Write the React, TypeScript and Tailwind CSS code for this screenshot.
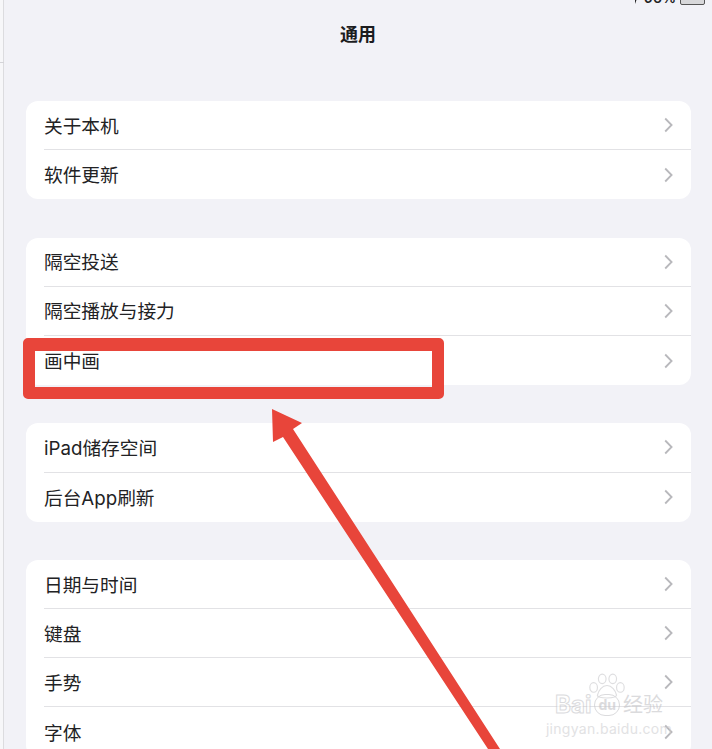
const groups = [
  ['关于本机', '软件更新'],
  ['隔空投送', '隔空播放与接力', '画中画'],
  ['iPad储存空间', '后台App刷新'],
  ['日期与时间', '键盘', '手势', '字体'],
];

function Chevron() {
  return (
    <svg width="9" height="16" viewBox="0 0 9 16" fill="none" className="shrink-0">
      <path d="M1.2 1.5 7.6 8l-6.4 6.5" stroke="#b8b8bc" strokeWidth="1.8" />
    </svg>
  );
}

function Row({ label, last }: { label: string; last: boolean }) {
  return (
    <div className="flex h-[49.2px] pl-[18px]">
      <div className={`flex flex-1 items-center justify-between pr-[18px] ${last ? '' : 'border-b border-[#e2e2e5]'}`}>
        <span className="pt-[4px] text-[18.7px] leading-none text-[#222224]">{label}</span>
        <Chevron />
      </div>
    </div>
  );
}

function StatusBar() {
  return (
    <div className="absolute right-[7px] top-[-9px] flex items-center gap-[4px] text-[#222]">
      <svg width="10" height="13" viewBox="0 0 10 13">
        <path d="M9 1 1 6h4v6z" fill="#222" />
      </svg>
      <span className="text-[14px] font-semibold leading-none">96%</span>
      <div className="h-[13px] w-[25px] rounded-[2px] border border-[#555] bg-[#d8d8da]" />
    </div>
  );
}

function Watermark() {
  return (
    <div className="absolute left-[540px] top-[672px] flex h-[77px] w-[138px] flex-col items-center text-[#b9b9bd] opacity-60">
      <svg width="42" height="29" viewBox="0 0 44 28" fill="none" stroke="#c9c9cc" strokeWidth="1.2" className="ml-[-4px]">
        <ellipse cx="8" cy="15" rx="4" ry="5" />
        <ellipse cx="17" cy="6" rx="4" ry="5" />
        <ellipse cx="28" cy="6" rx="4" ry="5" />
        <ellipse cx="36" cy="15" rx="4" ry="5" />
        <path d="M22 13c-5 0-9 5-10 10-1 4 20 4 20 0-1-5-5-10-10-10Z" />
      </svg>
      <div className="mt-[-8px] flex items-center gap-[3px] whitespace-nowrap">
        <span className="text-[24px] font-bold leading-none text-white [-webkit-text-stroke:1px_#c4c4c8]">Bai</span>
        <span className="rounded-full border border-[#c4c4c8] px-[3px] text-[14px] font-bold leading-[20px] text-[#c4c4c8]">du</span>
        <span className="text-[20px] leading-none text-[#c4c4c8]">经验</span>
      </div>
      <div className="mt-[5px] whitespace-nowrap text-[14px] leading-none tracking-[0.3px] text-[#cfcfd2]">jingyan.baidu.com</div>
    </div>
  );
}

export default function App() {
  return (
    <div className="relative h-[749px] w-[712px] overflow-hidden bg-[#f2f2f7] font-['Inter','Noto_Sans_CJK_SC',sans-serif]">
      {/* sidebar edge left of the settings pane */}
      <div className="absolute left-0 top-0 h-full w-[4px] border-r border-[#dcdcdf] bg-[#f7f7f9]" />
      <div className="absolute left-0 top-[62px] h-px w-[4px] bg-[#d4d4d8]" />
      <StatusBar />

      <div className="flex h-[69px] items-center justify-center pl-[4px]">
        <h1 className="text-[18px] font-semibold leading-none text-[#1c1c1e]">通用</h1>
      </div>

      <div className="flex flex-col gap-[38.2px] pl-[26px] pr-[21px] pt-[32px]">
        {groups.map((rows) => (
          <div key={rows[0]} className="rounded-[12px] bg-white">
            {rows.map((label, i) => (
              <Row key={label} label={label} last={i === rows.length - 1} />
            ))}
          </div>
        ))}
      </div>

      <Watermark />

      {/* red annotation drawn over the screenshot */}
      <div className="absolute left-[23px] top-[338px] h-[61px] w-[421px] rounded-[5px] border-[12px] border-t-[13px] border-[#e8453a]" />
      <svg width="712" height="749" viewBox="0 0 712 749" className="absolute left-0 top-0">
        <path d="M272 409 302 423 293 429 500 749 H488 L283 437 273 442Z" fill="#e8453a" />
      </svg>
    </div>
  );
}
